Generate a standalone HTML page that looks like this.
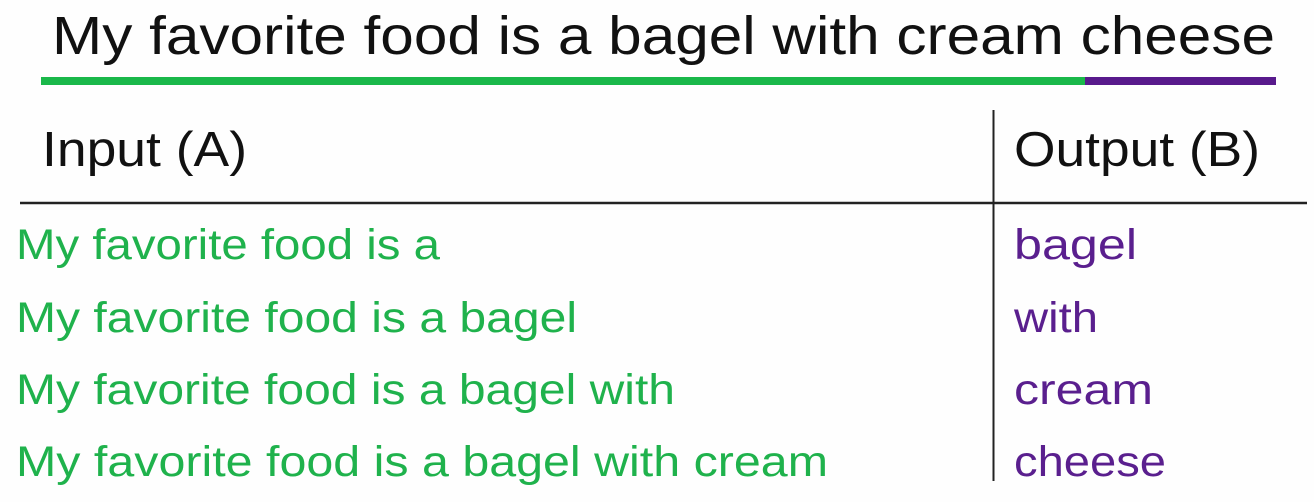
<!DOCTYPE html>
<html><head><meta charset="utf-8"><style>
html,body{margin:0;padding:0;background:#fff;width:1314px;height:502px;overflow:hidden}
svg text{font-family:"Liberation Sans",sans-serif}
</style></head><body>
<svg width="1314" height="502" xmlns="http://www.w3.org/2000/svg">
<rect width="1314" height="502" fill="#fefefe"/>
<text x="52" y="54" font-size="54" fill="#111" textLength="1223" lengthAdjust="spacingAndGlyphs">My favorite food is a bagel with cream cheese</text>
<rect x="41" y="77" width="1044" height="8" fill="#1ab84a"/>
<rect x="1085" y="77" width="191" height="8" fill="#581a8c"/>
<line x1="993.5" y1="110" x2="993.5" y2="481" stroke="#222" stroke-width="2"/>
<line x1="20" y1="203" x2="1307" y2="203" stroke="#222" stroke-width="2.5"/>
<text x="42" y="166" font-size="49" fill="#111" textLength="205" lengthAdjust="spacingAndGlyphs">Input (A)</text>
<text x="1014" y="166" font-size="49" fill="#111" textLength="246" lengthAdjust="spacingAndGlyphs">Output (B)</text>
<g font-size="43" fill="#1fb24c">
<text x="16" y="259" textLength="424" lengthAdjust="spacingAndGlyphs">My favorite food is a</text>
<text x="16" y="332" textLength="561" lengthAdjust="spacingAndGlyphs">My favorite food is a bagel</text>
<text x="16" y="404" textLength="659" lengthAdjust="spacingAndGlyphs">My favorite food is a bagel with</text>
<text x="16" y="476" textLength="812" lengthAdjust="spacingAndGlyphs">My favorite food is a bagel with cream</text>
</g>
<g font-size="43" fill="#5a1f8e">
<text x="1014" y="259" textLength="123" lengthAdjust="spacingAndGlyphs">bagel</text>
<text x="1014" y="332" textLength="84" lengthAdjust="spacingAndGlyphs">with</text>
<text x="1014" y="404" textLength="139" lengthAdjust="spacingAndGlyphs">cream</text>
<text x="1014" y="476" textLength="152" lengthAdjust="spacingAndGlyphs">cheese</text>
</g>
</svg>
</body></html>
